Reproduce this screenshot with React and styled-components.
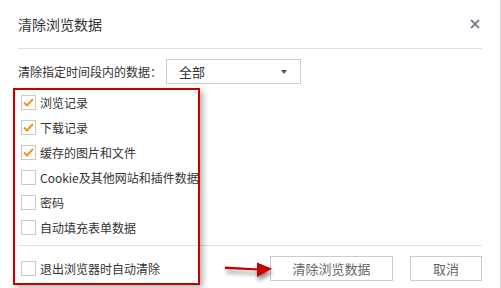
import React from "react";
import styled, { createGlobalStyle } from "styled-components";

const Global = createGlobalStyle`
  html, body { margin: 0; padding: 0; background: #fff; }
  * { box-sizing: border-box; }
`;

const Dialog = styled.div`
  position: relative;
  width: 501px;
  height: 288px;
  background: #fff;
  border-right: 1px solid #d4d4d4;
  font-family: "Noto Sans CJK SC", "Noto Sans", sans-serif;
  color: #333;
  overflow: hidden;
`;

const Header = styled.div`
  margin: 0 18px;
  height: 49px;
  border-bottom: 1px solid #dfe2e8;
  display: flex;
  align-items: center;
  justify-content: space-between;
  padding-right: 2px;
  padding-bottom: 1px;
`;

const Title = styled.div`
  font-size: 14px;
  line-height: 20px;
  color: #333;
`;

const Close = styled.button`
  border: 0;
  background: none;
  padding: 0;
  width: 10px;
  height: 10px;
  display: flex;
  cursor: pointer;
`;

const Body = styled.div`
  padding: 0 18px;
`;

const RangeRow = styled.div`
  margin-top: 10px;
  display: flex;
  align-items: center;
  height: 25px;
  font-size: 12px;
`;

const RangeLabel = styled.span`
  width: 148px;
  white-space: nowrap;
`;

const Select = styled.div`
  width: 135px;
  height: 25px;
  border: 1px solid #cccccc;
  display: flex;
  align-items: center;
  justify-content: space-between;
  padding: 0 13px 0 12px;
  font-size: 13px;
  color: #333;
`;

const Caret = styled.span`
  width: 0;
  height: 0;
  border-left: 3.5px solid transparent;
  border-right: 3.5px solid transparent;
  border-top: 4px solid #555;
`;

const OptionList = styled.div`
  margin-top: 6px;
  display: flex;
  flex-direction: column;
`;

const Option = styled.label`
  height: 25px;
  display: flex;
  align-items: center;
  font-size: 12px;
  color: #333;
  padding-left: ${(p) => p.$indent || 3}px;
  white-space: nowrap;
`;

const Box = styled.span`
  width: 15px;
  height: 15px;
  border: 1px solid #c9c9c9;
  background: #fff;
  margin-right: 4px;
  display: flex;
  align-items: center;
  justify-content: center;
  flex-shrink: 0;
`;

const Footer = styled.div`
  margin: 5px 18px 0;
  border-top: 1px solid #dcdfe4;
  padding-top: 10px;
  display: flex;
  align-items: center;
  justify-content: space-between;
`;

const Buttons = styled.div`
  display: flex;
  gap: 17px;
`;

const Button = styled.button`
  width: ${(p) => p.$w}px;
  height: 25px;
  border: 1px solid #cccccc;
  background: #fff;
  color: #666;
  font-family: "Noto Sans CJK SC", "Noto Sans", sans-serif;
  font-size: 13px;
  padding: 0;
  cursor: pointer;
`;

const Highlight = styled.div`
  position: absolute;
  left: 13px;
  top: 88px;
  width: 187px;
  height: 197px;
  border: 2px solid #c40000;
  box-shadow: 3px 3px 6px rgba(0, 0, 0, 0.3);
  pointer-events: none;
`;

const ArrowSvg = styled.svg`
  position: absolute;
  left: 222px;
  top: 258px;
  overflow: visible;
  filter: drop-shadow(1px 4px 2px rgba(0, 0, 0, 0.45));
  pointer-events: none;
`;

const Check = () => (
  <svg width="13" height="13" viewBox="0 0 13 13">
    <path d="M2 6.5 L5 9.5 L11 3" fill="none" stroke="#f7931e" strokeWidth="2" />
  </svg>
);

const Checkbox = ({ checked }) => <Box>{checked && <Check />}</Box>;

const options = [
  { label: "浏览记录", checked: true },
  { label: "下载记录", checked: true },
  { label: "缓存的图片和文件", checked: true },
  { label: "Cookie及其他网站和插件数据", checked: false },
  { label: "密码", checked: false },
  { label: "自动填充表单数据", checked: false },
];

export default function App() {
  return (
    <>
      <Global />
      <Dialog>
        <Header>
          <Title>清除浏览数据</Title>
          <Close aria-label="关闭">
            <svg width="10" height="10" viewBox="0 0 10 10">
              <path d="M1 1 L9 9 M9 1 L1 9" stroke="#7d8596" strokeWidth="2" />
            </svg>
          </Close>
        </Header>
        <Body>
          <RangeRow>
            <RangeLabel>清除指定时间段内的数据：</RangeLabel>
            <Select>
              <span>全部</span>
              <Caret />
            </Select>
          </RangeRow>
          <OptionList>
            {options.map((o) => (
              <Option key={o.label}>
                <Checkbox checked={o.checked} />
                {o.label}
              </Option>
            ))}
          </OptionList>
        </Body>
        <Footer>
          <Option>
            <Checkbox />
            退出浏览器时自动清除
          </Option>
          <Buttons>
            <Button $w={123}>清除浏览数据</Button>
            <Button $w={72}>取消</Button>
          </Buttons>
        </Footer>
        <Highlight />
        <ArrowSvg width="52" height="22" viewBox="0 0 52 22">
          <path d="M3 8.5 L37 10.5 L37 12.5 L3 11 Z" fill="#c40000" />
          <path d="M35 4.5 L50 10.8 L35 19 Z" fill="#c40000" />
        </ArrowSvg>
      </Dialog>
    </>
  );
}
